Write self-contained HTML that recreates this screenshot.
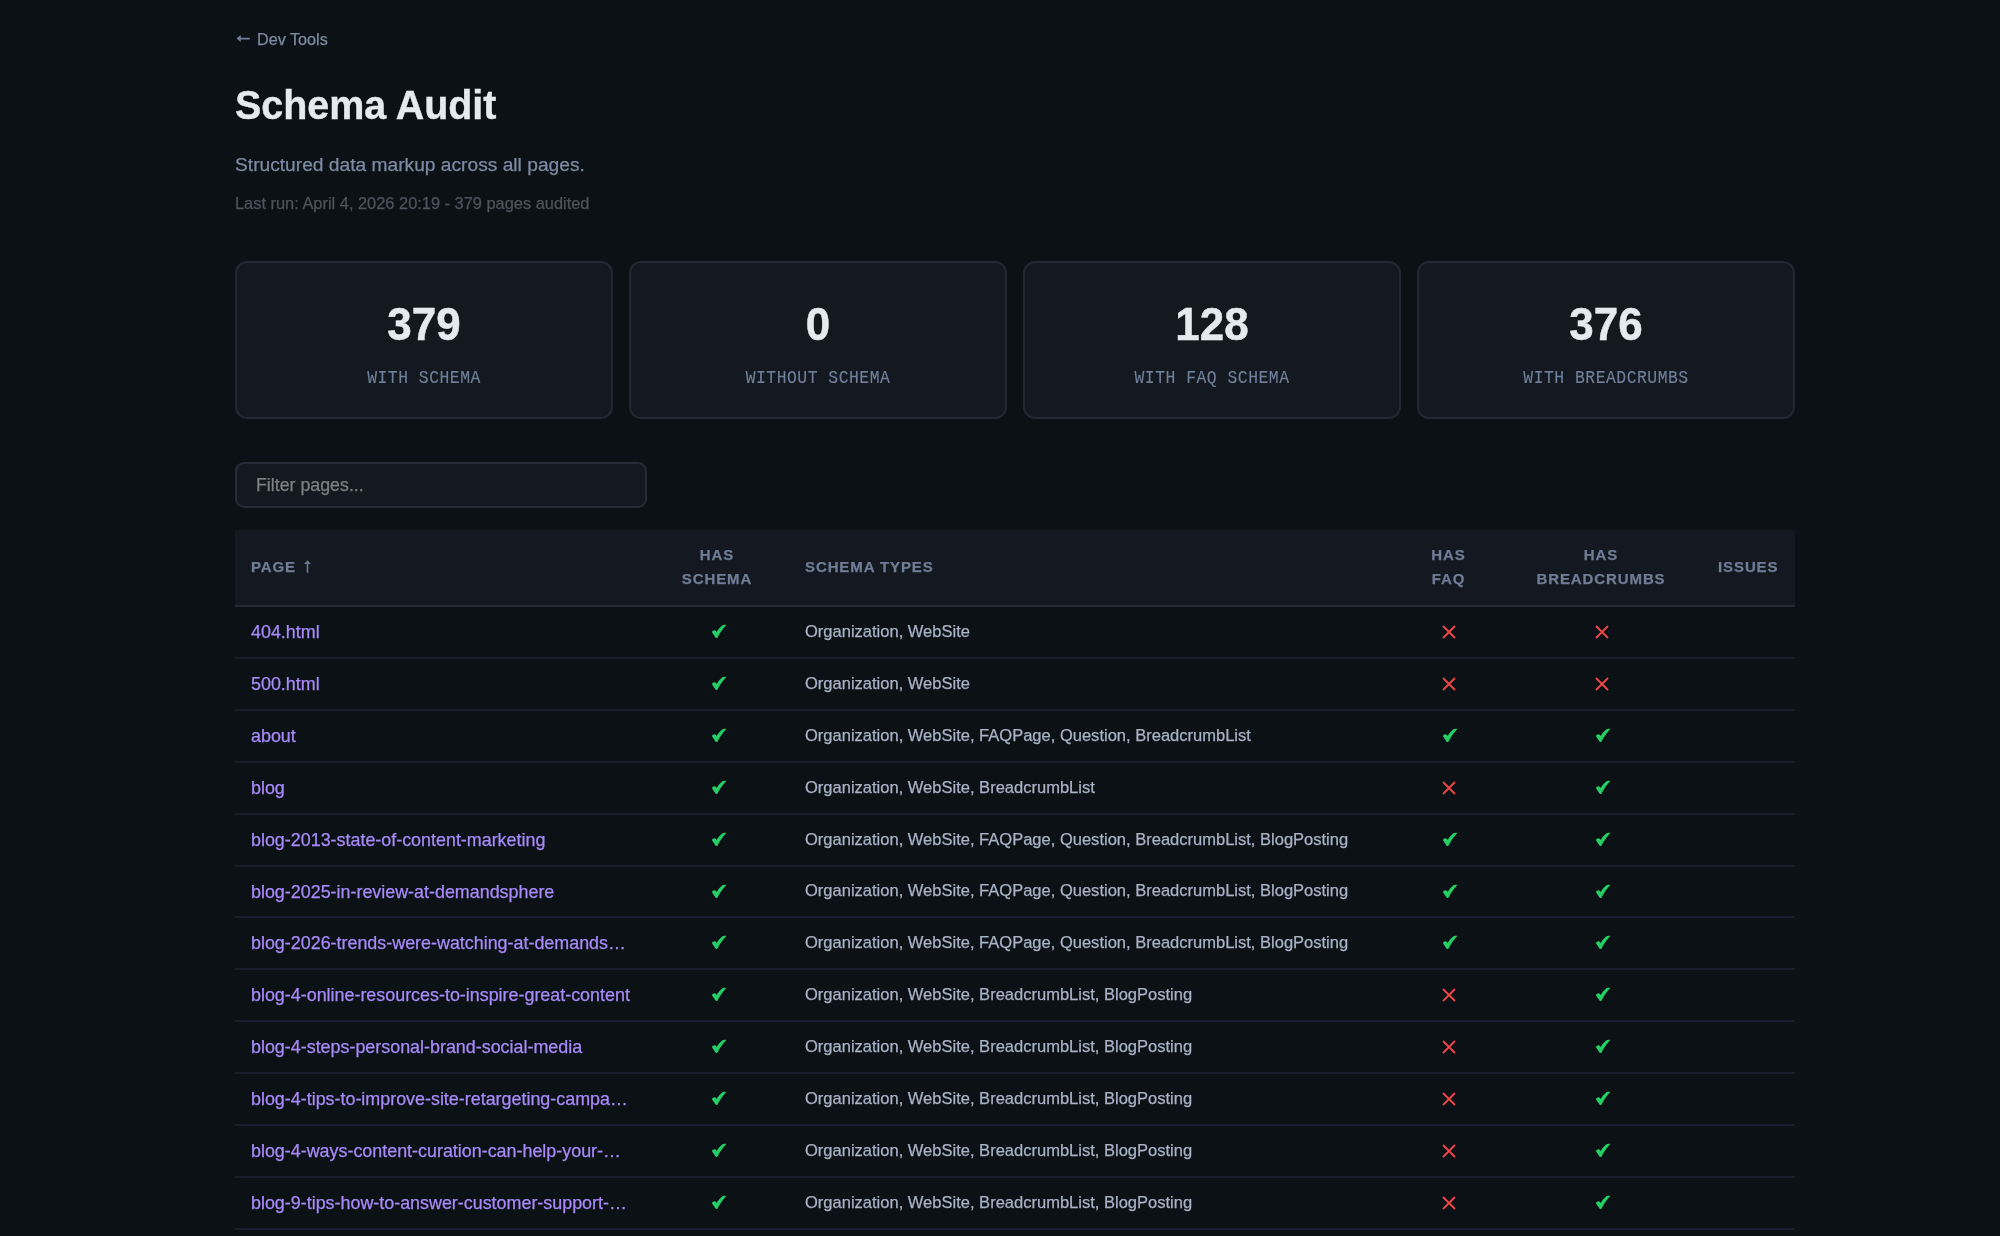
<!DOCTYPE html>
<html><head><meta charset="utf-8">
<style>
*{box-sizing:border-box;margin:0;padding:0}
html,body{width:2000px;height:1236px;overflow:hidden;background:#0c1116}
body{font-family:"Liberation Sans",sans-serif;position:relative}
#root{position:absolute;left:0;top:0;width:2000px;height:1236px;will-change:transform;-webkit-text-stroke-width:0.25px}
.abs{position:absolute;white-space:nowrap}
#back{left:236px;top:29px;font-size:16.2px;line-height:20px;color:#7d8aa1}
#back svg{position:absolute;left:0.3px;top:6px}
#back span{position:absolute;left:21px;top:0}
#title{left:235px;top:82px;font-size:41.5px;line-height:46px;font-weight:bold;color:#e6e9f0;transform:scaleX(0.95);transform-origin:0 0;-webkit-text-stroke:0.4px #e6e9f0}
#sub{left:235px;top:152.5px;font-size:19.2px;line-height:24px;color:#7d8ba4}
#run{left:235px;top:193px;font-size:16.4px;line-height:20px;color:#4e545e}
.card{position:absolute;top:261px;width:378px;height:158px;background:#141921;border:2px solid #222834;border-radius:12px;text-align:center}
.card .n{position:absolute;left:0;right:0;top:34.2px;font-size:47px;line-height:54px;font-weight:bold;color:#e6e9f0;transform:scaleX(0.935);-webkit-text-stroke:0.5px #e6e9f0}
.card .l{position:absolute;left:0;right:0;top:105px;-webkit-text-stroke:0.1px #71809a;font-family:"Liberation Mono",monospace;font-size:16.4px;line-height:22px;letter-spacing:0.5px;color:#71809a;transform:scaleY(1.09)}
#filter{position:absolute;left:235px;top:462px;width:412px;height:46px;background:#141921;border:2px solid #262c38;border-radius:9px}
#filter span{position:absolute;left:19px;top:10px;font-size:17.8px;line-height:22px;color:#7f8084}
table{position:absolute;left:235px;top:529.5px;width:1560px;border-collapse:collapse;table-layout:fixed}
th{background:#141921;height:76px;border-bottom:2px solid #262b36;color:#6f7d96;font-size:15px;line-height:24px;letter-spacing:0.9px;font-weight:bold;text-align:left;padding:0 16px}
th.c{text-align:center}
td{height:52px;border-bottom:2px solid #191e2c;padding:0 16px;font-size:16.53px;color:#a9b3c7;white-space:nowrap;overflow:hidden;text-overflow:ellipsis}
tbody tr:nth-child(6) td{height:51px}
td.p{font-size:17.9px;color:#a88bfa;text-overflow:clip;padding-top:2px}
td.c{position:relative;padding:0}
td svg{position:absolute;left:50%}
svg.ck{margin-left:-6.4px;top:17px}
svg.xx{margin-left:-6.5px;top:18.2px}
</style></head><body><div id="root">
<div id="back" class="abs"><svg width="15" height="9" viewBox="0 0 15 9"><path d="M0.5,3.6 L4.7,0.1 L4.7,2.8 L13.8,2.8 L13.8,4.4 L4.7,4.4 L4.7,7.1 Z" fill="#6d7d9a"/></svg><span>Dev Tools</span></div>
<div id="title" class="abs">Schema Audit</div>
<div id="sub" class="abs">Structured data markup across all pages.</div>
<div id="run" class="abs">Last run: April 4, 2026 20:19 - 379 pages audited</div>

<div class="card" style="left:235px"><div class="n">379</div><div class="l">WITH SCHEMA</div></div>
<div class="card" style="left:629px"><div class="n">0</div><div class="l">WITHOUT SCHEMA</div></div>
<div class="card" style="left:1023px"><div class="n">128</div><div class="l">WITH FAQ SCHEMA</div></div>
<div class="card" style="left:1417px"><div class="n">376</div><div class="l">WITH BREADCRUMBS</div></div>

<div id="filter"><span>Filter pages...</span></div>

<table>
<colgroup><col style="width:410px"><col style="width:144px"><col style="width:608px"><col style="width:103px"><col style="width:202px"><col style="width:93px"></colgroup>
<thead><tr><th style="position:relative">PAGE<svg style="position:absolute;left:69px;top:30.5px" width="7" height="13" viewBox="0 0 7 13"><path d="M0,4.1 L3.5,0.2 L7,4.1 Z M2.65,3.8 H4.35 V12.8 H2.65 Z" fill="#687690"/></svg></th><th class="c">HAS<br>SCHEMA</th><th>SCHEMA TYPES</th><th class="c">HAS<br>FAQ</th><th class="c">HAS<br>BREADCRUMBS</th><th>ISSUES</th></tr></thead>
<tbody id="tb">
<tr><td class="p">404.html</td><td class="c"><svg class="ck" width="17" height="15" viewBox="0 0 17 15"><path d="M0.9,7.7 C1.4,6.9 2.4,6.3 3.5,6.2 C4.2,6.2 4.6,6.5 5.0,7.0 L5.7,8.0 C7.2,5.6 9.2,2.9 11.4,1.3 C12.4,0.6 13.6,0.4 15.5,1.0 C14.7,1.6 13.9,2.4 13.4,3.2 C11.6,5.3 9.0,8.8 7.1,12.5 C6.6,13.6 6.2,14.2 5.4,14.1 C4.9,14.0 4.6,13.6 4.3,13.2 L2.3,10.3 C1.8,9.6 1.3,9.0 0.9,7.7 Z" fill="#26cf63"/></svg></td><td>Organization, WebSite</td><td class="c"><svg class="xx" width="14" height="14" viewBox="0 0 14 14"><path d="M1.5,1.5 L12.5,12.5 M12.5,1.5 L1.5,12.5" stroke="#ef4747" stroke-width="1.8" stroke-linecap="round"/></svg></td><td class="c"><svg class="xx" width="14" height="14" viewBox="0 0 14 14"><path d="M1.5,1.5 L12.5,12.5 M12.5,1.5 L1.5,12.5" stroke="#ef4747" stroke-width="1.8" stroke-linecap="round"/></svg></td><td></td></tr>
<tr><td class="p">500.html</td><td class="c"><svg class="ck" width="17" height="15" viewBox="0 0 17 15"><path d="M0.9,7.7 C1.4,6.9 2.4,6.3 3.5,6.2 C4.2,6.2 4.6,6.5 5.0,7.0 L5.7,8.0 C7.2,5.6 9.2,2.9 11.4,1.3 C12.4,0.6 13.6,0.4 15.5,1.0 C14.7,1.6 13.9,2.4 13.4,3.2 C11.6,5.3 9.0,8.8 7.1,12.5 C6.6,13.6 6.2,14.2 5.4,14.1 C4.9,14.0 4.6,13.6 4.3,13.2 L2.3,10.3 C1.8,9.6 1.3,9.0 0.9,7.7 Z" fill="#26cf63"/></svg></td><td>Organization, WebSite</td><td class="c"><svg class="xx" width="14" height="14" viewBox="0 0 14 14"><path d="M1.5,1.5 L12.5,12.5 M12.5,1.5 L1.5,12.5" stroke="#ef4747" stroke-width="1.8" stroke-linecap="round"/></svg></td><td class="c"><svg class="xx" width="14" height="14" viewBox="0 0 14 14"><path d="M1.5,1.5 L12.5,12.5 M12.5,1.5 L1.5,12.5" stroke="#ef4747" stroke-width="1.8" stroke-linecap="round"/></svg></td><td></td></tr>
<tr><td class="p">about</td><td class="c"><svg class="ck" width="17" height="15" viewBox="0 0 17 15"><path d="M0.9,7.7 C1.4,6.9 2.4,6.3 3.5,6.2 C4.2,6.2 4.6,6.5 5.0,7.0 L5.7,8.0 C7.2,5.6 9.2,2.9 11.4,1.3 C12.4,0.6 13.6,0.4 15.5,1.0 C14.7,1.6 13.9,2.4 13.4,3.2 C11.6,5.3 9.0,8.8 7.1,12.5 C6.6,13.6 6.2,14.2 5.4,14.1 C4.9,14.0 4.6,13.6 4.3,13.2 L2.3,10.3 C1.8,9.6 1.3,9.0 0.9,7.7 Z" fill="#26cf63"/></svg></td><td>Organization, WebSite, FAQPage, Question, BreadcrumbList</td><td class="c"><svg class="ck" width="17" height="15" viewBox="0 0 17 15"><path d="M0.9,7.7 C1.4,6.9 2.4,6.3 3.5,6.2 C4.2,6.2 4.6,6.5 5.0,7.0 L5.7,8.0 C7.2,5.6 9.2,2.9 11.4,1.3 C12.4,0.6 13.6,0.4 15.5,1.0 C14.7,1.6 13.9,2.4 13.4,3.2 C11.6,5.3 9.0,8.8 7.1,12.5 C6.6,13.6 6.2,14.2 5.4,14.1 C4.9,14.0 4.6,13.6 4.3,13.2 L2.3,10.3 C1.8,9.6 1.3,9.0 0.9,7.7 Z" fill="#26cf63"/></svg></td><td class="c"><svg class="ck" width="17" height="15" viewBox="0 0 17 15"><path d="M0.9,7.7 C1.4,6.9 2.4,6.3 3.5,6.2 C4.2,6.2 4.6,6.5 5.0,7.0 L5.7,8.0 C7.2,5.6 9.2,2.9 11.4,1.3 C12.4,0.6 13.6,0.4 15.5,1.0 C14.7,1.6 13.9,2.4 13.4,3.2 C11.6,5.3 9.0,8.8 7.1,12.5 C6.6,13.6 6.2,14.2 5.4,14.1 C4.9,14.0 4.6,13.6 4.3,13.2 L2.3,10.3 C1.8,9.6 1.3,9.0 0.9,7.7 Z" fill="#26cf63"/></svg></td><td></td></tr>
<tr><td class="p">blog</td><td class="c"><svg class="ck" width="17" height="15" viewBox="0 0 17 15"><path d="M0.9,7.7 C1.4,6.9 2.4,6.3 3.5,6.2 C4.2,6.2 4.6,6.5 5.0,7.0 L5.7,8.0 C7.2,5.6 9.2,2.9 11.4,1.3 C12.4,0.6 13.6,0.4 15.5,1.0 C14.7,1.6 13.9,2.4 13.4,3.2 C11.6,5.3 9.0,8.8 7.1,12.5 C6.6,13.6 6.2,14.2 5.4,14.1 C4.9,14.0 4.6,13.6 4.3,13.2 L2.3,10.3 C1.8,9.6 1.3,9.0 0.9,7.7 Z" fill="#26cf63"/></svg></td><td>Organization, WebSite, BreadcrumbList</td><td class="c"><svg class="xx" width="14" height="14" viewBox="0 0 14 14"><path d="M1.5,1.5 L12.5,12.5 M12.5,1.5 L1.5,12.5" stroke="#ef4747" stroke-width="1.8" stroke-linecap="round"/></svg></td><td class="c"><svg class="ck" width="17" height="15" viewBox="0 0 17 15"><path d="M0.9,7.7 C1.4,6.9 2.4,6.3 3.5,6.2 C4.2,6.2 4.6,6.5 5.0,7.0 L5.7,8.0 C7.2,5.6 9.2,2.9 11.4,1.3 C12.4,0.6 13.6,0.4 15.5,1.0 C14.7,1.6 13.9,2.4 13.4,3.2 C11.6,5.3 9.0,8.8 7.1,12.5 C6.6,13.6 6.2,14.2 5.4,14.1 C4.9,14.0 4.6,13.6 4.3,13.2 L2.3,10.3 C1.8,9.6 1.3,9.0 0.9,7.7 Z" fill="#26cf63"/></svg></td><td></td></tr>
<tr><td class="p">blog-2013-state-of-content-marketing</td><td class="c"><svg class="ck" width="17" height="15" viewBox="0 0 17 15"><path d="M0.9,7.7 C1.4,6.9 2.4,6.3 3.5,6.2 C4.2,6.2 4.6,6.5 5.0,7.0 L5.7,8.0 C7.2,5.6 9.2,2.9 11.4,1.3 C12.4,0.6 13.6,0.4 15.5,1.0 C14.7,1.6 13.9,2.4 13.4,3.2 C11.6,5.3 9.0,8.8 7.1,12.5 C6.6,13.6 6.2,14.2 5.4,14.1 C4.9,14.0 4.6,13.6 4.3,13.2 L2.3,10.3 C1.8,9.6 1.3,9.0 0.9,7.7 Z" fill="#26cf63"/></svg></td><td>Organization, WebSite, FAQPage, Question, BreadcrumbList, BlogPosting</td><td class="c"><svg class="ck" width="17" height="15" viewBox="0 0 17 15"><path d="M0.9,7.7 C1.4,6.9 2.4,6.3 3.5,6.2 C4.2,6.2 4.6,6.5 5.0,7.0 L5.7,8.0 C7.2,5.6 9.2,2.9 11.4,1.3 C12.4,0.6 13.6,0.4 15.5,1.0 C14.7,1.6 13.9,2.4 13.4,3.2 C11.6,5.3 9.0,8.8 7.1,12.5 C6.6,13.6 6.2,14.2 5.4,14.1 C4.9,14.0 4.6,13.6 4.3,13.2 L2.3,10.3 C1.8,9.6 1.3,9.0 0.9,7.7 Z" fill="#26cf63"/></svg></td><td class="c"><svg class="ck" width="17" height="15" viewBox="0 0 17 15"><path d="M0.9,7.7 C1.4,6.9 2.4,6.3 3.5,6.2 C4.2,6.2 4.6,6.5 5.0,7.0 L5.7,8.0 C7.2,5.6 9.2,2.9 11.4,1.3 C12.4,0.6 13.6,0.4 15.5,1.0 C14.7,1.6 13.9,2.4 13.4,3.2 C11.6,5.3 9.0,8.8 7.1,12.5 C6.6,13.6 6.2,14.2 5.4,14.1 C4.9,14.0 4.6,13.6 4.3,13.2 L2.3,10.3 C1.8,9.6 1.3,9.0 0.9,7.7 Z" fill="#26cf63"/></svg></td><td></td></tr>
<tr><td class="p">blog-2025-in-review-at-demandsphere</td><td class="c"><svg class="ck" width="17" height="15" viewBox="0 0 17 15"><path d="M0.9,7.7 C1.4,6.9 2.4,6.3 3.5,6.2 C4.2,6.2 4.6,6.5 5.0,7.0 L5.7,8.0 C7.2,5.6 9.2,2.9 11.4,1.3 C12.4,0.6 13.6,0.4 15.5,1.0 C14.7,1.6 13.9,2.4 13.4,3.2 C11.6,5.3 9.0,8.8 7.1,12.5 C6.6,13.6 6.2,14.2 5.4,14.1 C4.9,14.0 4.6,13.6 4.3,13.2 L2.3,10.3 C1.8,9.6 1.3,9.0 0.9,7.7 Z" fill="#26cf63"/></svg></td><td>Organization, WebSite, FAQPage, Question, BreadcrumbList, BlogPosting</td><td class="c"><svg class="ck" width="17" height="15" viewBox="0 0 17 15"><path d="M0.9,7.7 C1.4,6.9 2.4,6.3 3.5,6.2 C4.2,6.2 4.6,6.5 5.0,7.0 L5.7,8.0 C7.2,5.6 9.2,2.9 11.4,1.3 C12.4,0.6 13.6,0.4 15.5,1.0 C14.7,1.6 13.9,2.4 13.4,3.2 C11.6,5.3 9.0,8.8 7.1,12.5 C6.6,13.6 6.2,14.2 5.4,14.1 C4.9,14.0 4.6,13.6 4.3,13.2 L2.3,10.3 C1.8,9.6 1.3,9.0 0.9,7.7 Z" fill="#26cf63"/></svg></td><td class="c"><svg class="ck" width="17" height="15" viewBox="0 0 17 15"><path d="M0.9,7.7 C1.4,6.9 2.4,6.3 3.5,6.2 C4.2,6.2 4.6,6.5 5.0,7.0 L5.7,8.0 C7.2,5.6 9.2,2.9 11.4,1.3 C12.4,0.6 13.6,0.4 15.5,1.0 C14.7,1.6 13.9,2.4 13.4,3.2 C11.6,5.3 9.0,8.8 7.1,12.5 C6.6,13.6 6.2,14.2 5.4,14.1 C4.9,14.0 4.6,13.6 4.3,13.2 L2.3,10.3 C1.8,9.6 1.3,9.0 0.9,7.7 Z" fill="#26cf63"/></svg></td><td></td></tr>
<tr><td class="p">blog-2026-trends-were-watching-at-demands…</td><td class="c"><svg class="ck" width="17" height="15" viewBox="0 0 17 15"><path d="M0.9,7.7 C1.4,6.9 2.4,6.3 3.5,6.2 C4.2,6.2 4.6,6.5 5.0,7.0 L5.7,8.0 C7.2,5.6 9.2,2.9 11.4,1.3 C12.4,0.6 13.6,0.4 15.5,1.0 C14.7,1.6 13.9,2.4 13.4,3.2 C11.6,5.3 9.0,8.8 7.1,12.5 C6.6,13.6 6.2,14.2 5.4,14.1 C4.9,14.0 4.6,13.6 4.3,13.2 L2.3,10.3 C1.8,9.6 1.3,9.0 0.9,7.7 Z" fill="#26cf63"/></svg></td><td>Organization, WebSite, FAQPage, Question, BreadcrumbList, BlogPosting</td><td class="c"><svg class="ck" width="17" height="15" viewBox="0 0 17 15"><path d="M0.9,7.7 C1.4,6.9 2.4,6.3 3.5,6.2 C4.2,6.2 4.6,6.5 5.0,7.0 L5.7,8.0 C7.2,5.6 9.2,2.9 11.4,1.3 C12.4,0.6 13.6,0.4 15.5,1.0 C14.7,1.6 13.9,2.4 13.4,3.2 C11.6,5.3 9.0,8.8 7.1,12.5 C6.6,13.6 6.2,14.2 5.4,14.1 C4.9,14.0 4.6,13.6 4.3,13.2 L2.3,10.3 C1.8,9.6 1.3,9.0 0.9,7.7 Z" fill="#26cf63"/></svg></td><td class="c"><svg class="ck" width="17" height="15" viewBox="0 0 17 15"><path d="M0.9,7.7 C1.4,6.9 2.4,6.3 3.5,6.2 C4.2,6.2 4.6,6.5 5.0,7.0 L5.7,8.0 C7.2,5.6 9.2,2.9 11.4,1.3 C12.4,0.6 13.6,0.4 15.5,1.0 C14.7,1.6 13.9,2.4 13.4,3.2 C11.6,5.3 9.0,8.8 7.1,12.5 C6.6,13.6 6.2,14.2 5.4,14.1 C4.9,14.0 4.6,13.6 4.3,13.2 L2.3,10.3 C1.8,9.6 1.3,9.0 0.9,7.7 Z" fill="#26cf63"/></svg></td><td></td></tr>
<tr><td class="p">blog-4-online-resources-to-inspire-great-content</td><td class="c"><svg class="ck" width="17" height="15" viewBox="0 0 17 15"><path d="M0.9,7.7 C1.4,6.9 2.4,6.3 3.5,6.2 C4.2,6.2 4.6,6.5 5.0,7.0 L5.7,8.0 C7.2,5.6 9.2,2.9 11.4,1.3 C12.4,0.6 13.6,0.4 15.5,1.0 C14.7,1.6 13.9,2.4 13.4,3.2 C11.6,5.3 9.0,8.8 7.1,12.5 C6.6,13.6 6.2,14.2 5.4,14.1 C4.9,14.0 4.6,13.6 4.3,13.2 L2.3,10.3 C1.8,9.6 1.3,9.0 0.9,7.7 Z" fill="#26cf63"/></svg></td><td>Organization, WebSite, BreadcrumbList, BlogPosting</td><td class="c"><svg class="xx" width="14" height="14" viewBox="0 0 14 14"><path d="M1.5,1.5 L12.5,12.5 M12.5,1.5 L1.5,12.5" stroke="#ef4747" stroke-width="1.8" stroke-linecap="round"/></svg></td><td class="c"><svg class="ck" width="17" height="15" viewBox="0 0 17 15"><path d="M0.9,7.7 C1.4,6.9 2.4,6.3 3.5,6.2 C4.2,6.2 4.6,6.5 5.0,7.0 L5.7,8.0 C7.2,5.6 9.2,2.9 11.4,1.3 C12.4,0.6 13.6,0.4 15.5,1.0 C14.7,1.6 13.9,2.4 13.4,3.2 C11.6,5.3 9.0,8.8 7.1,12.5 C6.6,13.6 6.2,14.2 5.4,14.1 C4.9,14.0 4.6,13.6 4.3,13.2 L2.3,10.3 C1.8,9.6 1.3,9.0 0.9,7.7 Z" fill="#26cf63"/></svg></td><td></td></tr>
<tr><td class="p">blog-4-steps-personal-brand-social-media</td><td class="c"><svg class="ck" width="17" height="15" viewBox="0 0 17 15"><path d="M0.9,7.7 C1.4,6.9 2.4,6.3 3.5,6.2 C4.2,6.2 4.6,6.5 5.0,7.0 L5.7,8.0 C7.2,5.6 9.2,2.9 11.4,1.3 C12.4,0.6 13.6,0.4 15.5,1.0 C14.7,1.6 13.9,2.4 13.4,3.2 C11.6,5.3 9.0,8.8 7.1,12.5 C6.6,13.6 6.2,14.2 5.4,14.1 C4.9,14.0 4.6,13.6 4.3,13.2 L2.3,10.3 C1.8,9.6 1.3,9.0 0.9,7.7 Z" fill="#26cf63"/></svg></td><td>Organization, WebSite, BreadcrumbList, BlogPosting</td><td class="c"><svg class="xx" width="14" height="14" viewBox="0 0 14 14"><path d="M1.5,1.5 L12.5,12.5 M12.5,1.5 L1.5,12.5" stroke="#ef4747" stroke-width="1.8" stroke-linecap="round"/></svg></td><td class="c"><svg class="ck" width="17" height="15" viewBox="0 0 17 15"><path d="M0.9,7.7 C1.4,6.9 2.4,6.3 3.5,6.2 C4.2,6.2 4.6,6.5 5.0,7.0 L5.7,8.0 C7.2,5.6 9.2,2.9 11.4,1.3 C12.4,0.6 13.6,0.4 15.5,1.0 C14.7,1.6 13.9,2.4 13.4,3.2 C11.6,5.3 9.0,8.8 7.1,12.5 C6.6,13.6 6.2,14.2 5.4,14.1 C4.9,14.0 4.6,13.6 4.3,13.2 L2.3,10.3 C1.8,9.6 1.3,9.0 0.9,7.7 Z" fill="#26cf63"/></svg></td><td></td></tr>
<tr><td class="p">blog-4-tips-to-improve-site-retargeting-campa…</td><td class="c"><svg class="ck" width="17" height="15" viewBox="0 0 17 15"><path d="M0.9,7.7 C1.4,6.9 2.4,6.3 3.5,6.2 C4.2,6.2 4.6,6.5 5.0,7.0 L5.7,8.0 C7.2,5.6 9.2,2.9 11.4,1.3 C12.4,0.6 13.6,0.4 15.5,1.0 C14.7,1.6 13.9,2.4 13.4,3.2 C11.6,5.3 9.0,8.8 7.1,12.5 C6.6,13.6 6.2,14.2 5.4,14.1 C4.9,14.0 4.6,13.6 4.3,13.2 L2.3,10.3 C1.8,9.6 1.3,9.0 0.9,7.7 Z" fill="#26cf63"/></svg></td><td>Organization, WebSite, BreadcrumbList, BlogPosting</td><td class="c"><svg class="xx" width="14" height="14" viewBox="0 0 14 14"><path d="M1.5,1.5 L12.5,12.5 M12.5,1.5 L1.5,12.5" stroke="#ef4747" stroke-width="1.8" stroke-linecap="round"/></svg></td><td class="c"><svg class="ck" width="17" height="15" viewBox="0 0 17 15"><path d="M0.9,7.7 C1.4,6.9 2.4,6.3 3.5,6.2 C4.2,6.2 4.6,6.5 5.0,7.0 L5.7,8.0 C7.2,5.6 9.2,2.9 11.4,1.3 C12.4,0.6 13.6,0.4 15.5,1.0 C14.7,1.6 13.9,2.4 13.4,3.2 C11.6,5.3 9.0,8.8 7.1,12.5 C6.6,13.6 6.2,14.2 5.4,14.1 C4.9,14.0 4.6,13.6 4.3,13.2 L2.3,10.3 C1.8,9.6 1.3,9.0 0.9,7.7 Z" fill="#26cf63"/></svg></td><td></td></tr>
<tr><td class="p">blog-4-ways-content-curation-can-help-your-…</td><td class="c"><svg class="ck" width="17" height="15" viewBox="0 0 17 15"><path d="M0.9,7.7 C1.4,6.9 2.4,6.3 3.5,6.2 C4.2,6.2 4.6,6.5 5.0,7.0 L5.7,8.0 C7.2,5.6 9.2,2.9 11.4,1.3 C12.4,0.6 13.6,0.4 15.5,1.0 C14.7,1.6 13.9,2.4 13.4,3.2 C11.6,5.3 9.0,8.8 7.1,12.5 C6.6,13.6 6.2,14.2 5.4,14.1 C4.9,14.0 4.6,13.6 4.3,13.2 L2.3,10.3 C1.8,9.6 1.3,9.0 0.9,7.7 Z" fill="#26cf63"/></svg></td><td>Organization, WebSite, BreadcrumbList, BlogPosting</td><td class="c"><svg class="xx" width="14" height="14" viewBox="0 0 14 14"><path d="M1.5,1.5 L12.5,12.5 M12.5,1.5 L1.5,12.5" stroke="#ef4747" stroke-width="1.8" stroke-linecap="round"/></svg></td><td class="c"><svg class="ck" width="17" height="15" viewBox="0 0 17 15"><path d="M0.9,7.7 C1.4,6.9 2.4,6.3 3.5,6.2 C4.2,6.2 4.6,6.5 5.0,7.0 L5.7,8.0 C7.2,5.6 9.2,2.9 11.4,1.3 C12.4,0.6 13.6,0.4 15.5,1.0 C14.7,1.6 13.9,2.4 13.4,3.2 C11.6,5.3 9.0,8.8 7.1,12.5 C6.6,13.6 6.2,14.2 5.4,14.1 C4.9,14.0 4.6,13.6 4.3,13.2 L2.3,10.3 C1.8,9.6 1.3,9.0 0.9,7.7 Z" fill="#26cf63"/></svg></td><td></td></tr>
<tr><td class="p">blog-9-tips-how-to-answer-customer-support-…</td><td class="c"><svg class="ck" width="17" height="15" viewBox="0 0 17 15"><path d="M0.9,7.7 C1.4,6.9 2.4,6.3 3.5,6.2 C4.2,6.2 4.6,6.5 5.0,7.0 L5.7,8.0 C7.2,5.6 9.2,2.9 11.4,1.3 C12.4,0.6 13.6,0.4 15.5,1.0 C14.7,1.6 13.9,2.4 13.4,3.2 C11.6,5.3 9.0,8.8 7.1,12.5 C6.6,13.6 6.2,14.2 5.4,14.1 C4.9,14.0 4.6,13.6 4.3,13.2 L2.3,10.3 C1.8,9.6 1.3,9.0 0.9,7.7 Z" fill="#26cf63"/></svg></td><td>Organization, WebSite, BreadcrumbList, BlogPosting</td><td class="c"><svg class="xx" width="14" height="14" viewBox="0 0 14 14"><path d="M1.5,1.5 L12.5,12.5 M12.5,1.5 L1.5,12.5" stroke="#ef4747" stroke-width="1.8" stroke-linecap="round"/></svg></td><td class="c"><svg class="ck" width="17" height="15" viewBox="0 0 17 15"><path d="M0.9,7.7 C1.4,6.9 2.4,6.3 3.5,6.2 C4.2,6.2 4.6,6.5 5.0,7.0 L5.7,8.0 C7.2,5.6 9.2,2.9 11.4,1.3 C12.4,0.6 13.6,0.4 15.5,1.0 C14.7,1.6 13.9,2.4 13.4,3.2 C11.6,5.3 9.0,8.8 7.1,12.5 C6.6,13.6 6.2,14.2 5.4,14.1 C4.9,14.0 4.6,13.6 4.3,13.2 L2.3,10.3 C1.8,9.6 1.3,9.0 0.9,7.7 Z" fill="#26cf63"/></svg></td><td></td></tr>
</tbody>
</table>
</div></body></html>
